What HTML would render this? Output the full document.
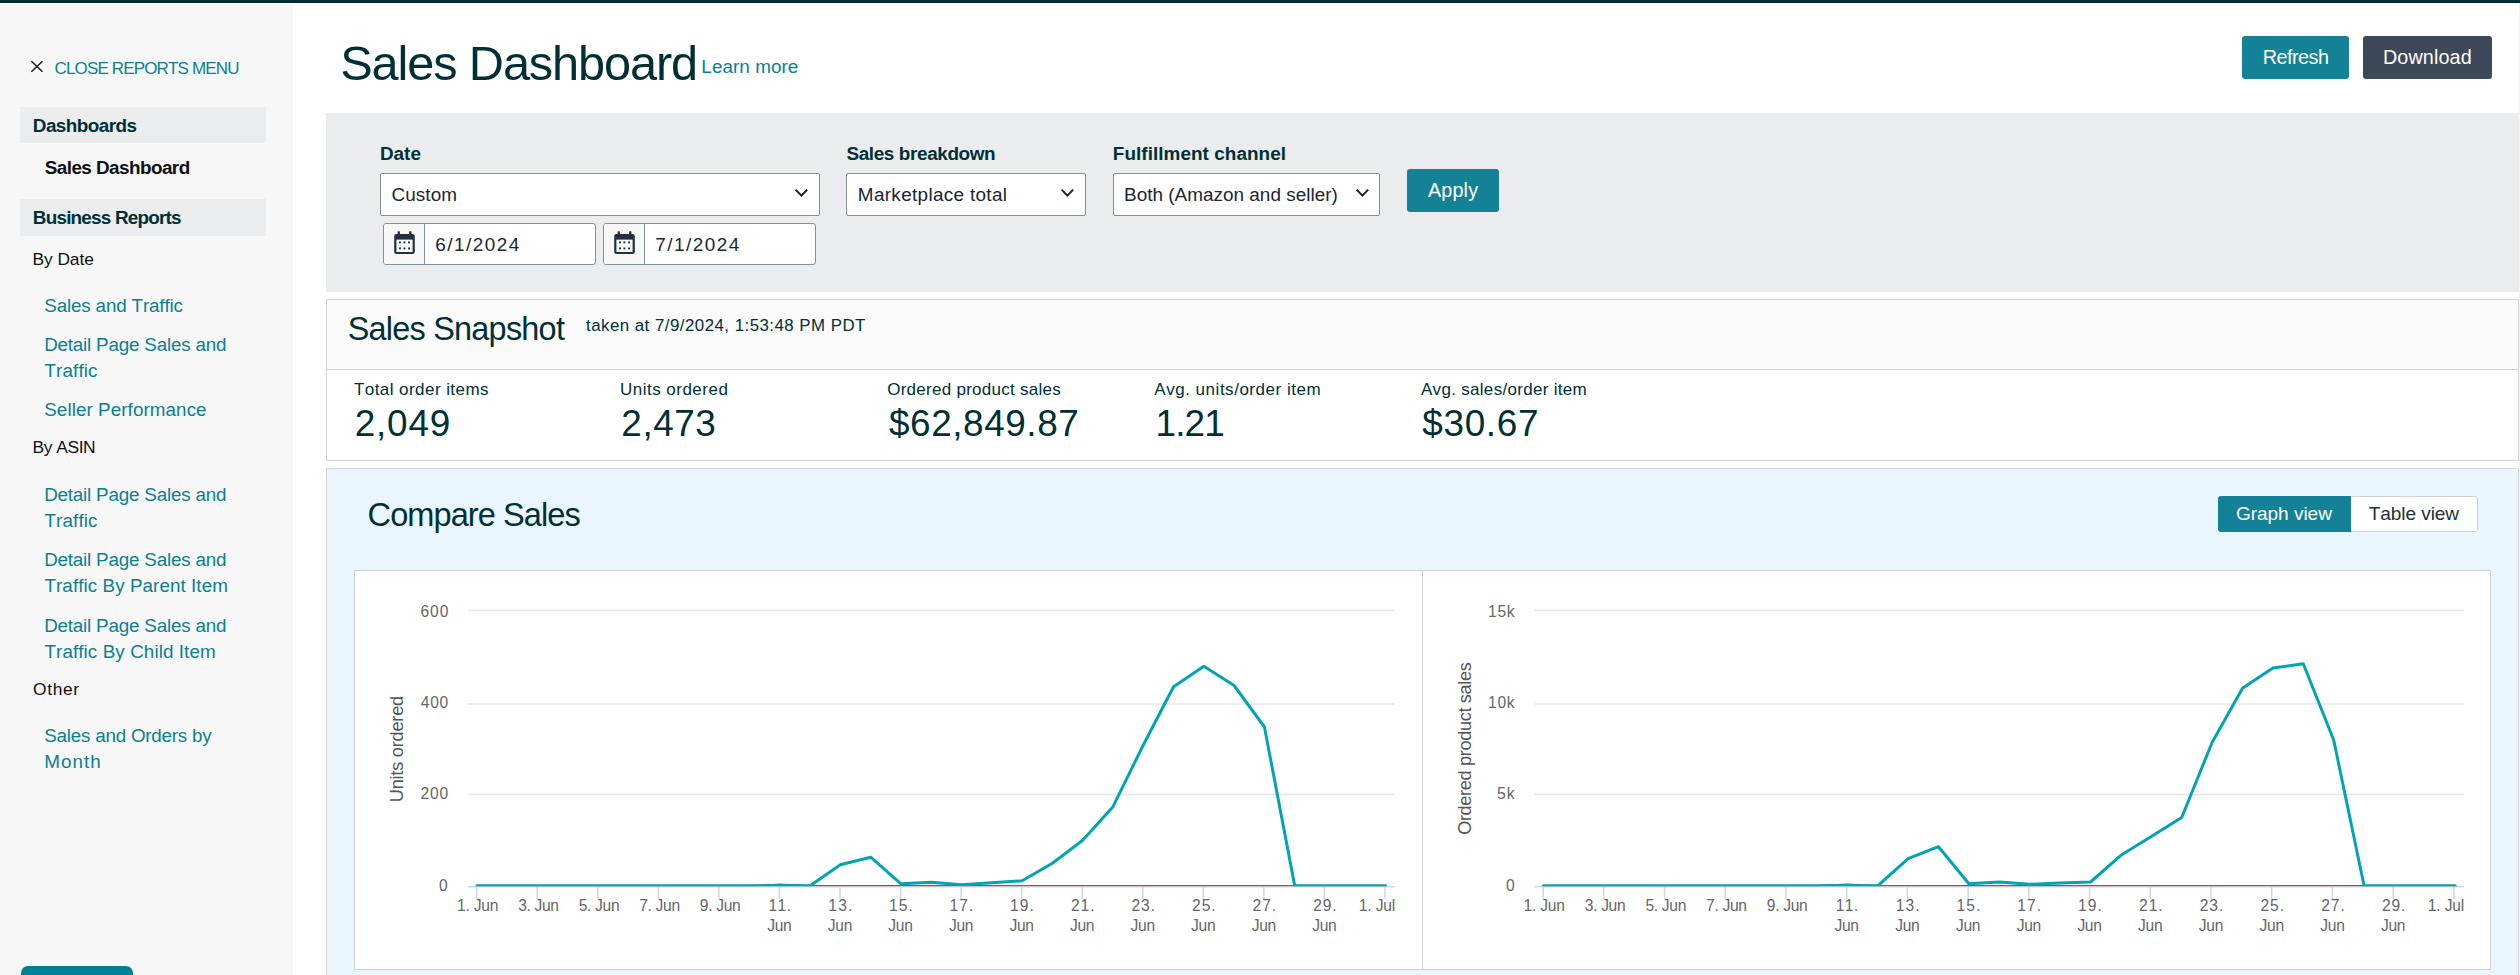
<!DOCTYPE html>
<html lang="en"><head><meta charset="utf-8"><title>Sales Dashboard</title><style>
html,body{margin:0;padding:0}
body{width:2520px;height:975px;overflow:hidden;background:#fff;position:relative;font-family:"Liberation Sans",sans-serif;font-kerning:none;-webkit-font-smoothing:antialiased}
.t{position:absolute;white-space:nowrap;line-height:1;display:block}
.b{position:absolute;display:block}
svg text{font-family:"Liberation Sans",sans-serif;font-kerning:none}
</style></head>
<body>
<div class="b " style="left:0px;top:0px;width:2520px;height:3px;background:#002f36;border-bottom:1px solid #00252d;box-sizing:border-box"></div>
<nav>
<div class="b " style="left:0px;top:4px;width:293px;height:971px;background:#f7f7f7"></div>
<svg class="b" style="left:29px;top:59px" width="16" height="16" viewBox="0 0 16 16"><path d="M2.4 2.2 L13.5 12.7 M13.5 2.2 L2.4 12.7" stroke="#0c1f2e" stroke-width="1.5" fill="none"/></svg>
<span class="t " style="left:54.54px;top:60px;font-size:17.01px;letter-spacing:-0.844px;color:#0a7f93;">CLOSE REPORTS MENU</span>
<div class="b " style="left:20px;top:107px;width:246px;height:36px;background:#ebecee"></div>
<span class="t " style="left:32.84px;top:117px;font-size:18.90px;letter-spacing:-0.554px;color:#002f36;font-weight:bold;">Dashboards</span>
<span class="t " style="left:44.76px;top:159px;font-size:18.90px;letter-spacing:-0.562px;color:#0f1111;font-weight:bold;">Sales Dashboard</span>
<div class="b " style="left:20px;top:199px;width:246px;height:37px;background:#ebecee"></div>
<span class="t " style="left:32.84px;top:209px;font-size:18.90px;letter-spacing:-0.790px;color:#002f36;font-weight:bold;">Business Reports</span>
<span class="t " style="left:32.57px;top:251px;font-size:17.40px;letter-spacing:-0.099px;color:#0f1111;">By Date</span>
<span class="t " style="left:44.25px;top:297px;font-size:18.82px;letter-spacing:-0.154px;color:#0a7f93;">Sales and Traffic</span>
<span class="t " style="left:44.16px;top:336px;font-size:18.82px;letter-spacing:-0.194px;color:#0a7f93;">Detail Page Sales and</span>
<span class="t " style="left:44.48px;top:362px;font-size:18.82px;letter-spacing:0.123px;color:#0a7f93;">Traffic</span>
<span class="t " style="left:44.25px;top:401px;font-size:18.82px;letter-spacing:0.077px;color:#0a7f93;">Seller Performance</span>
<span class="t " style="left:32.57px;top:439px;font-size:17.40px;letter-spacing:-0.451px;color:#0f1111;">By ASIN</span>
<span class="t " style="left:44.16px;top:486px;font-size:18.82px;letter-spacing:-0.194px;color:#0a7f93;">Detail Page Sales and</span>
<span class="t " style="left:44.48px;top:512px;font-size:18.82px;letter-spacing:0.123px;color:#0a7f93;">Traffic</span>
<span class="t " style="left:44.16px;top:551px;font-size:18.82px;letter-spacing:-0.194px;color:#0a7f93;">Detail Page Sales and</span>
<span class="t " style="left:44.48px;top:577px;font-size:18.82px;letter-spacing:0.071px;color:#0a7f93;">Traffic By Parent Item</span>
<span class="t " style="left:44.16px;top:617px;font-size:18.82px;letter-spacing:-0.194px;color:#0a7f93;">Detail Page Sales and</span>
<span class="t " style="left:44.48px;top:643px;font-size:18.82px;letter-spacing:0.092px;color:#0a7f93;">Traffic By Child Item</span>
<span class="t " style="left:33.08px;top:681px;font-size:17.40px;letter-spacing:0.599px;color:#0f1111;">Other</span>
<span class="t " style="left:44.25px;top:727px;font-size:18.82px;letter-spacing:-0.226px;color:#0a7f93;">Sales and Orders by</span>
<span class="t " style="left:44.16px;top:753px;font-size:18.82px;letter-spacing:1.065px;color:#0a7f93;">Month</span>
<div class="b " style="left:20.8px;top:965.5px;width:112.2px;height:20px;background:#008296;border-radius:7px"></div>
</nav>
<main>
<div class="b " style="left:2519px;top:3px;width:1px;height:972px;background:#f4f4f4"></div>
<span class="t h1" style="left:340.19px;top:39px;font-size:48.69px;letter-spacing:-1.112px;color:#002f36;">Sales Dashboard</span>
<span class="t " style="left:701.35px;top:58px;font-size:18.90px;letter-spacing:0.038px;color:#0a7f93;">Learn more</span>
<div class="b " style="left:2242px;top:36px;width:107px;height:43px;background:#148296;border-radius:3px"></div>
<span class="t " style="left:2262.68px;top:48px;font-size:19.77px;letter-spacing:-0.486px;color:#fff;">Refresh</span>
<div class="b " style="left:2363px;top:36px;width:129px;height:43px;background:#3d4858;border-radius:3px"></div>
<span class="t " style="left:2382.88px;top:48px;font-size:19.77px;letter-spacing:0.125px;color:#fff;">Download</span>
<div class="b " style="left:326px;top:113px;width:2193px;height:179px;background:#ebecee"></div>
<span class="t " style="left:379.94px;top:145px;font-size:18.90px;letter-spacing:0.015px;color:#002f36;font-weight:bold;">Date</span>
<span class="t " style="left:846.46px;top:145px;font-size:18.90px;letter-spacing:-0.371px;color:#002f36;font-weight:bold;">Sales breakdown</span>
<span class="t " style="left:1112.84px;top:145px;font-size:18.90px;letter-spacing:0.055px;color:#002f36;font-weight:bold;">Fulfillment channel</span>
<div class="b " style="left:380px;top:173px;width:440px;height:43px;background:#fff;border:1px solid #858f99;border-radius:2px;box-sizing:border-box"></div>
<div class="b " style="left:846px;top:173px;width:240px;height:43px;background:#fff;border:1px solid #858f99;border-radius:2px;box-sizing:border-box"></div>
<div class="b " style="left:1113px;top:173px;width:267px;height:43px;background:#fff;border:1px solid #858f99;border-radius:2px;box-sizing:border-box"></div>
<svg class="b" style="left:793px;top:187px" width="17" height="12" viewBox="-2 -2 17 12"><path d="M0.6 0.6 L6.4 6.6 L12.2 0.6" stroke="#16222e" stroke-width="2" fill="none"/></svg>
<svg class="b" style="left:1059.3px;top:187px" width="17" height="12" viewBox="-2 -2 17 12"><path d="M0.6 0.6 L6.4 6.6 L12.2 0.6" stroke="#16222e" stroke-width="2" fill="none"/></svg>
<svg class="b" style="left:1353.8px;top:187px" width="17" height="12" viewBox="-2 -2 17 12"><path d="M0.6 0.6 L6.4 6.6 L12.2 0.6" stroke="#16222e" stroke-width="2" fill="none"/></svg>
<span class="t " style="left:391.54px;top:186px;font-size:18.90px;letter-spacing:0.078px;color:#1b2533;">Custom</span>
<span class="t " style="left:857.85px;top:186px;font-size:18.90px;letter-spacing:0.331px;color:#1b2533;">Marketplace total</span>
<span class="t " style="left:1124.05px;top:186px;font-size:18.90px;letter-spacing:0.025px;color:#1b2533;">Both (Amazon and seller)</span>
<div class="b " style="left:1407px;top:169px;width:92px;height:43px;background:#148296;border-radius:3px"></div>
<span class="t " style="left:1428.06px;top:181px;font-size:19.77px;letter-spacing:0.131px;color:#fff;">Apply</span>
<div class="b " style="left:383px;top:223px;width:213px;height:42px;background:#fff;border:1px solid #858f99;border-radius:3px;box-sizing:border-box"></div>
<div class="b " style="left:384px;top:224px;width:40px;height:40px;background:#f7f7f8;border-right:1px solid #858f99;border-radius:2px 0 0 2px"></div>
<svg class="b" style="left:394px;top:230px" width="22" height="26" viewBox="0 0 22 26"><rect x="3.6" y="1.3" width="2.3" height="4" fill="#232f3e"/><rect x="15.1" y="1.3" width="2.3" height="4" fill="#232f3e"/><rect x="1.3" y="5" width="18.4" height="18" rx="1.2" ry="1.2" fill="none" stroke="#232f3e" stroke-width="2.2"/><rect x="1.3" y="5" width="18.4" height="4.6" fill="#232f3e"/><rect x="5.05" y="11.450000000000001" width="1.9" height="1.9" fill="#232f3e"/><rect x="5.05" y="17.45" width="1.9" height="1.9" fill="#232f3e"/><rect x="9.450000000000001" y="11.450000000000001" width="1.9" height="1.9" fill="#232f3e"/><rect x="9.450000000000001" y="17.45" width="1.9" height="1.9" fill="#232f3e"/><rect x="14.05" y="11.450000000000001" width="1.9" height="1.9" fill="#232f3e"/><rect x="14.05" y="17.45" width="1.9" height="1.9" fill="#232f3e"/></svg>
<span class="t " style="left:435.34px;top:236px;font-size:18.90px;letter-spacing:1.492px;color:#1b2533;">6/1/2024</span>
<div class="b " style="left:603px;top:223px;width:213px;height:42px;background:#fff;border:1px solid #858f99;border-radius:3px;box-sizing:border-box"></div>
<div class="b " style="left:604px;top:224px;width:40px;height:40px;background:#f7f7f8;border-right:1px solid #858f99;border-radius:2px 0 0 2px"></div>
<svg class="b" style="left:614px;top:230px" width="22" height="26" viewBox="0 0 22 26"><rect x="3.6" y="1.3" width="2.3" height="4" fill="#232f3e"/><rect x="15.1" y="1.3" width="2.3" height="4" fill="#232f3e"/><rect x="1.3" y="5" width="18.4" height="18" rx="1.2" ry="1.2" fill="none" stroke="#232f3e" stroke-width="2.2"/><rect x="1.3" y="5" width="18.4" height="4.6" fill="#232f3e"/><rect x="5.05" y="11.450000000000001" width="1.9" height="1.9" fill="#232f3e"/><rect x="5.05" y="17.45" width="1.9" height="1.9" fill="#232f3e"/><rect x="9.450000000000001" y="11.450000000000001" width="1.9" height="1.9" fill="#232f3e"/><rect x="9.450000000000001" y="17.45" width="1.9" height="1.9" fill="#232f3e"/><rect x="14.05" y="11.450000000000001" width="1.9" height="1.9" fill="#232f3e"/><rect x="14.05" y="17.45" width="1.9" height="1.9" fill="#232f3e"/></svg>
<span class="t " style="left:655.33px;top:236px;font-size:18.90px;letter-spacing:1.493px;color:#1b2533;">7/1/2024</span>
<div class="b " style="left:326px;top:299px;width:2193px;height:162px;background:#fff;border:1px solid #d3d4d6;box-sizing:border-box"></div>
<div class="b " style="left:327px;top:300px;width:2191px;height:69px;background:#fafafa;border-bottom:1px solid #d3d4d6"></div>
<span class="t " style="left:347.63px;top:313px;font-size:32.41px;letter-spacing:-0.748px;color:#002f36;">Sales Snapshot</span>
<span class="t " style="left:586.04px;top:318px;font-size:16.86px;letter-spacing:0.470px;color:#002f36;">taken at 7/9/2024, 1:53:48 PM PDT</span>
<span class="t " style="left:353.92px;top:381px;font-size:17.01px;letter-spacing:0.443px;color:#002f36;">Total order items</span>
<span class="t " style="left:354.74px;top:406px;font-size:36.92px;letter-spacing:0.779px;color:#002f36;">2,049</span>
<span class="t " style="left:619.99px;top:381px;font-size:17.01px;letter-spacing:0.483px;color:#002f36;">Units ordered</span>
<span class="t " style="left:621.34px;top:406px;font-size:36.92px;letter-spacing:0.547px;color:#002f36;">2,473</span>
<span class="t " style="left:887.19px;top:381px;font-size:17.01px;letter-spacing:0.271px;color:#002f36;">Ordered product sales</span>
<span class="t " style="left:889.00px;top:406px;font-size:36.92px;letter-spacing:0.564px;color:#002f36;">$62,849.87</span>
<span class="t " style="left:1154.27px;top:381px;font-size:17.01px;letter-spacing:0.523px;color:#002f36;">Avg. units/order item</span>
<span class="t " style="left:1155.59px;top:406px;font-size:36.92px;letter-spacing:-0.914px;color:#002f36;">1.21</span>
<span class="t " style="left:1420.97px;top:381px;font-size:17.01px;letter-spacing:0.304px;color:#002f36;">Avg. sales/order item</span>
<span class="t " style="left:1422.30px;top:406px;font-size:36.92px;letter-spacing:0.646px;color:#002f36;">$30.67</span>
<div class="b " style="left:326px;top:468px;width:2193px;height:520px;background:#eaf6fe;border:1px solid #d3d4d6;box-sizing:border-box"></div>
<span class="t " style="left:367.55px;top:499px;font-size:32.56px;letter-spacing:-0.923px;color:#002f36;">Compare Sales</span>
<div class="b " style="left:2218px;top:496px;width:260px;height:36px;background:#fff;border:1px solid #d0d3d6;border-radius:3px;box-sizing:border-box"></div>
<div class="b " style="left:2218px;top:496px;width:133px;height:36px;background:#148296;border-radius:3px 0 0 3px"></div>
<span class="t " style="left:2235.94px;top:504px;font-size:19.04px;letter-spacing:-0.032px;color:#fff;">Graph view</span>
<span class="t " style="left:2368.77px;top:504px;font-size:19.04px;letter-spacing:-0.070px;color:#232f3e;">Table view</span>
<div class="b " style="left:354px;top:570px;width:2137px;height:400px;background:#fff;border:1px solid #d0d0d0;box-sizing:border-box"></div>
<div class="b " style="left:1422px;top:571px;width:1px;height:398px;background:#d0d0d0"></div>
<svg class="b" style="left:0;top:0" width="2520" height="975" viewBox="0 0 2520 975">
<defs><clipPath id="plotclip"><rect x="460" y="600" width="2010" height="286.3"/></clipPath></defs>
<path d="M468 610.5 H1394.7" stroke="#e6e6e6" stroke-width="1.5" fill="none"/>
<path d="M468 704 H1394.7" stroke="#e6e6e6" stroke-width="1.5" fill="none"/>
<path d="M468 794.5 H1394.7" stroke="#e6e6e6" stroke-width="1.5" fill="none"/>
<path d="M468 886.7 H1394.7" stroke="#ccd6eb" stroke-width="1.5" fill="none"/>
<path d="M476.70 886.5 V899" stroke="#ccd6eb" stroke-width="1.5" fill="none"/>
<path d="M537.25 886.5 V899" stroke="#ccd6eb" stroke-width="1.5" fill="none"/>
<path d="M597.80 886.5 V899" stroke="#ccd6eb" stroke-width="1.5" fill="none"/>
<path d="M658.35 886.5 V899" stroke="#ccd6eb" stroke-width="1.5" fill="none"/>
<path d="M718.90 886.5 V899" stroke="#ccd6eb" stroke-width="1.5" fill="none"/>
<path d="M779.45 886.5 V899" stroke="#ccd6eb" stroke-width="1.5" fill="none"/>
<path d="M840.00 886.5 V899" stroke="#ccd6eb" stroke-width="1.5" fill="none"/>
<path d="M900.55 886.5 V899" stroke="#ccd6eb" stroke-width="1.5" fill="none"/>
<path d="M961.10 886.5 V899" stroke="#ccd6eb" stroke-width="1.5" fill="none"/>
<path d="M1021.65 886.5 V899" stroke="#ccd6eb" stroke-width="1.5" fill="none"/>
<path d="M1082.20 886.5 V899" stroke="#ccd6eb" stroke-width="1.5" fill="none"/>
<path d="M1142.75 886.5 V899" stroke="#ccd6eb" stroke-width="1.5" fill="none"/>
<path d="M1203.30 886.5 V899" stroke="#ccd6eb" stroke-width="1.5" fill="none"/>
<path d="M1263.85 886.5 V899" stroke="#ccd6eb" stroke-width="1.5" fill="none"/>
<path d="M1324.40 886.5 V899" stroke="#ccd6eb" stroke-width="1.5" fill="none"/>
<path d="M1384.95 886.5 V899" stroke="#ccd6eb" stroke-width="1.5" fill="none"/>
<path d="M476.90 885.75 L749.51 885.75 L779.80 884.3 L810.09 885.75 L1385.60 885.75" stroke="#e5350f" stroke-width="1.5" fill="none" stroke-linejoin="round" clip-path="url(#plotclip)"/>
<path d="M476.90 885.80 L749.51 885.80 L779.80 885.60 L810.09 885.80 L840.38 864.70 L870.67 857.20 L900.96 883.80 L931.25 882.20 L961.54 884.70 L991.83 882.70 L1022.12 880.80 L1052.41 863.30 L1082.70 840.30 L1112.99 806.70 L1143.28 745.00 L1173.57 686.70 L1203.86 666.30 L1234.15 685.50 L1264.44 727.00 L1294.73 885.80 L1385.60 885.80" stroke="#00a4b4" stroke-width="3" fill="none" stroke-linejoin="round" stroke-linecap="round" clip-path="url(#plotclip)"/>
<text x="420.41" y="616.60" font-size="15.60" text-anchor="start" fill="#666666" letter-spacing="0.937">600</text>
<text x="420.84" y="708.40" font-size="15.60" text-anchor="start" fill="#666666" letter-spacing="0.720">400</text>
<text x="420.42" y="799.20" font-size="15.60" text-anchor="start" fill="#666666" letter-spacing="0.933">200</text>
<text x="439.09" y="890.50" font-size="15.60" text-anchor="start" fill="#666666">0</text>
<text x="457.11" y="911.00" font-size="15.60" text-anchor="start" fill="#666666" letter-spacing="-0.219">1. Jun</text>
<text x="518.26" y="911.00" font-size="15.60" text-anchor="start" fill="#666666" letter-spacing="-0.338">3. Jun</text>
<text x="578.78" y="911.00" font-size="15.60" text-anchor="start" fill="#666666" letter-spacing="-0.332">5. Jun</text>
<text x="639.15" y="911.00" font-size="15.60" text-anchor="start" fill="#666666" letter-spacing="-0.297">7. Jun</text>
<text x="699.77" y="911.00" font-size="15.60" text-anchor="start" fill="#666666" letter-spacing="-0.310">9. Jun</text>
<text x="768.46" y="911.00" font-size="15.60" text-anchor="start" fill="#666666" letter-spacing="0.463">11.</text>
<text x="767.26" y="930.50" font-size="15.60" text-anchor="start" fill="#666666" letter-spacing="-0.298">Jun</text>
<text x="828.36" y="911.00" font-size="15.60" text-anchor="start" fill="#666666" letter-spacing="1.113">13.</text>
<text x="827.81" y="930.50" font-size="15.60" text-anchor="start" fill="#666666" letter-spacing="-0.298">Jun</text>
<text x="888.91" y="911.00" font-size="15.60" text-anchor="start" fill="#666666" letter-spacing="1.113">15.</text>
<text x="888.36" y="930.50" font-size="15.60" text-anchor="start" fill="#666666" letter-spacing="-0.298">Jun</text>
<text x="949.46" y="911.00" font-size="15.60" text-anchor="start" fill="#666666" letter-spacing="1.113">17.</text>
<text x="948.91" y="930.50" font-size="15.60" text-anchor="start" fill="#666666" letter-spacing="-0.298">Jun</text>
<text x="1010.01" y="911.00" font-size="15.60" text-anchor="start" fill="#666666" letter-spacing="1.113">19.</text>
<text x="1009.46" y="930.50" font-size="15.60" text-anchor="start" fill="#666666" letter-spacing="-0.298">Jun</text>
<text x="1070.97" y="911.00" font-size="15.60" text-anchor="start" fill="#666666" letter-spacing="0.911">21.</text>
<text x="1070.01" y="930.50" font-size="15.60" text-anchor="start" fill="#666666" letter-spacing="-0.298">Jun</text>
<text x="1131.52" y="911.00" font-size="15.60" text-anchor="start" fill="#666666" letter-spacing="0.911">23.</text>
<text x="1130.56" y="930.50" font-size="15.60" text-anchor="start" fill="#666666" letter-spacing="-0.298">Jun</text>
<text x="1192.07" y="911.00" font-size="15.60" text-anchor="start" fill="#666666" letter-spacing="0.911">25.</text>
<text x="1191.11" y="930.50" font-size="15.60" text-anchor="start" fill="#666666" letter-spacing="-0.298">Jun</text>
<text x="1252.62" y="911.00" font-size="15.60" text-anchor="start" fill="#666666" letter-spacing="0.911">27.</text>
<text x="1251.66" y="930.50" font-size="15.60" text-anchor="start" fill="#666666" letter-spacing="-0.298">Jun</text>
<text x="1313.17" y="911.00" font-size="15.60" text-anchor="start" fill="#666666" letter-spacing="0.911">29.</text>
<text x="1312.21" y="930.50" font-size="15.60" text-anchor="start" fill="#666666" letter-spacing="-0.298">Jun</text>
<text x="1358.81" y="911.00" font-size="15.60" text-anchor="start" fill="#666666" letter-spacing="-0.151">1. Jul</text>
<text transform="translate(403.30 802.20) rotate(-90)" font-size="18.17" fill="#555" letter-spacing="-0.224">Units ordered</text>
<path d="M1534.5 610.5 H2464.2" stroke="#e6e6e6" stroke-width="1.5" fill="none"/>
<path d="M1534.5 704 H2464.2" stroke="#e6e6e6" stroke-width="1.5" fill="none"/>
<path d="M1534.5 794.5 H2464.2" stroke="#e6e6e6" stroke-width="1.5" fill="none"/>
<path d="M1534.5 886.7 H2464.2" stroke="#ccd6eb" stroke-width="1.5" fill="none"/>
<path d="M1543.10 886.5 V899" stroke="#ccd6eb" stroke-width="1.5" fill="none"/>
<path d="M1603.82 886.5 V899" stroke="#ccd6eb" stroke-width="1.5" fill="none"/>
<path d="M1664.54 886.5 V899" stroke="#ccd6eb" stroke-width="1.5" fill="none"/>
<path d="M1725.26 886.5 V899" stroke="#ccd6eb" stroke-width="1.5" fill="none"/>
<path d="M1785.98 886.5 V899" stroke="#ccd6eb" stroke-width="1.5" fill="none"/>
<path d="M1846.70 886.5 V899" stroke="#ccd6eb" stroke-width="1.5" fill="none"/>
<path d="M1907.42 886.5 V899" stroke="#ccd6eb" stroke-width="1.5" fill="none"/>
<path d="M1968.14 886.5 V899" stroke="#ccd6eb" stroke-width="1.5" fill="none"/>
<path d="M2028.86 886.5 V899" stroke="#ccd6eb" stroke-width="1.5" fill="none"/>
<path d="M2089.58 886.5 V899" stroke="#ccd6eb" stroke-width="1.5" fill="none"/>
<path d="M2150.30 886.5 V899" stroke="#ccd6eb" stroke-width="1.5" fill="none"/>
<path d="M2211.02 886.5 V899" stroke="#ccd6eb" stroke-width="1.5" fill="none"/>
<path d="M2271.74 886.5 V899" stroke="#ccd6eb" stroke-width="1.5" fill="none"/>
<path d="M2332.46 886.5 V899" stroke="#ccd6eb" stroke-width="1.5" fill="none"/>
<path d="M2393.18 886.5 V899" stroke="#ccd6eb" stroke-width="1.5" fill="none"/>
<path d="M2453.90 886.5 V899" stroke="#ccd6eb" stroke-width="1.5" fill="none"/>
<path d="M1543.30 885.75 L1816.90 885.75 L1847.30 884.3 L1877.70 885.75 L2455.30 885.75" stroke="#e5350f" stroke-width="1.5" fill="none" stroke-linejoin="round" clip-path="url(#plotclip)"/>
<path d="M1543.30 885.80 L1816.90 885.80 L1847.30 885.60 L1877.70 885.80 L1908.10 858.70 L1938.50 846.70 L1968.90 883.80 L1999.30 882.00 L2029.70 884.30 L2060.10 883.00 L2090.50 882.00 L2120.90 855.30 L2151.30 836.50 L2181.70 817.50 L2212.10 742.50 L2242.50 688.30 L2272.90 668.00 L2303.30 663.80 L2333.70 740.00 L2364.10 885.80 L2455.30 885.80" stroke="#00a4b4" stroke-width="3" fill="none" stroke-linejoin="round" stroke-linecap="round" clip-path="url(#plotclip)"/>
<text x="1488.11" y="616.60" font-size="15.60" text-anchor="start" fill="#666666" letter-spacing="0.607">15k</text>
<text x="1488.11" y="708.40" font-size="15.60" text-anchor="start" fill="#666666" letter-spacing="0.607">10k</text>
<text x="1497.08" y="799.20" font-size="15.60" text-anchor="start" fill="#666666" letter-spacing="0.926">5k</text>
<text x="1505.89" y="890.50" font-size="15.60" text-anchor="start" fill="#666666">0</text>
<text x="1523.51" y="911.00" font-size="15.60" text-anchor="start" fill="#666666" letter-spacing="-0.219">1. Jun</text>
<text x="1584.83" y="911.00" font-size="15.60" text-anchor="start" fill="#666666" letter-spacing="-0.338">3. Jun</text>
<text x="1645.52" y="911.00" font-size="15.60" text-anchor="start" fill="#666666" letter-spacing="-0.332">5. Jun</text>
<text x="1706.06" y="911.00" font-size="15.60" text-anchor="start" fill="#666666" letter-spacing="-0.297">7. Jun</text>
<text x="1766.85" y="911.00" font-size="15.60" text-anchor="start" fill="#666666" letter-spacing="-0.310">9. Jun</text>
<text x="1835.71" y="911.00" font-size="15.60" text-anchor="start" fill="#666666" letter-spacing="0.463">11.</text>
<text x="1834.51" y="930.50" font-size="15.60" text-anchor="start" fill="#666666" letter-spacing="-0.298">Jun</text>
<text x="1895.78" y="911.00" font-size="15.60" text-anchor="start" fill="#666666" letter-spacing="1.113">13.</text>
<text x="1895.23" y="930.50" font-size="15.60" text-anchor="start" fill="#666666" letter-spacing="-0.298">Jun</text>
<text x="1956.50" y="911.00" font-size="15.60" text-anchor="start" fill="#666666" letter-spacing="1.113">15.</text>
<text x="1955.95" y="930.50" font-size="15.60" text-anchor="start" fill="#666666" letter-spacing="-0.298">Jun</text>
<text x="2017.22" y="911.00" font-size="15.60" text-anchor="start" fill="#666666" letter-spacing="1.113">17.</text>
<text x="2016.67" y="930.50" font-size="15.60" text-anchor="start" fill="#666666" letter-spacing="-0.298">Jun</text>
<text x="2077.94" y="911.00" font-size="15.60" text-anchor="start" fill="#666666" letter-spacing="1.113">19.</text>
<text x="2077.39" y="930.50" font-size="15.60" text-anchor="start" fill="#666666" letter-spacing="-0.298">Jun</text>
<text x="2139.07" y="911.00" font-size="15.60" text-anchor="start" fill="#666666" letter-spacing="0.911">21.</text>
<text x="2138.11" y="930.50" font-size="15.60" text-anchor="start" fill="#666666" letter-spacing="-0.298">Jun</text>
<text x="2199.79" y="911.00" font-size="15.60" text-anchor="start" fill="#666666" letter-spacing="0.911">23.</text>
<text x="2198.83" y="930.50" font-size="15.60" text-anchor="start" fill="#666666" letter-spacing="-0.298">Jun</text>
<text x="2260.51" y="911.00" font-size="15.60" text-anchor="start" fill="#666666" letter-spacing="0.911">25.</text>
<text x="2259.55" y="930.50" font-size="15.60" text-anchor="start" fill="#666666" letter-spacing="-0.298">Jun</text>
<text x="2321.23" y="911.00" font-size="15.60" text-anchor="start" fill="#666666" letter-spacing="0.911">27.</text>
<text x="2320.27" y="930.50" font-size="15.60" text-anchor="start" fill="#666666" letter-spacing="-0.298">Jun</text>
<text x="2381.95" y="911.00" font-size="15.60" text-anchor="start" fill="#666666" letter-spacing="0.911">29.</text>
<text x="2380.99" y="930.50" font-size="15.60" text-anchor="start" fill="#666666" letter-spacing="-0.298">Jun</text>
<text x="2427.81" y="911.00" font-size="15.60" text-anchor="start" fill="#666666" letter-spacing="-0.151">1. Jul</text>
<text transform="translate(1470.80 834.86) rotate(-90)" font-size="18.17" fill="#555" letter-spacing="-0.347">Ordered product sales</text>
</svg>
</main>
</body></html>
